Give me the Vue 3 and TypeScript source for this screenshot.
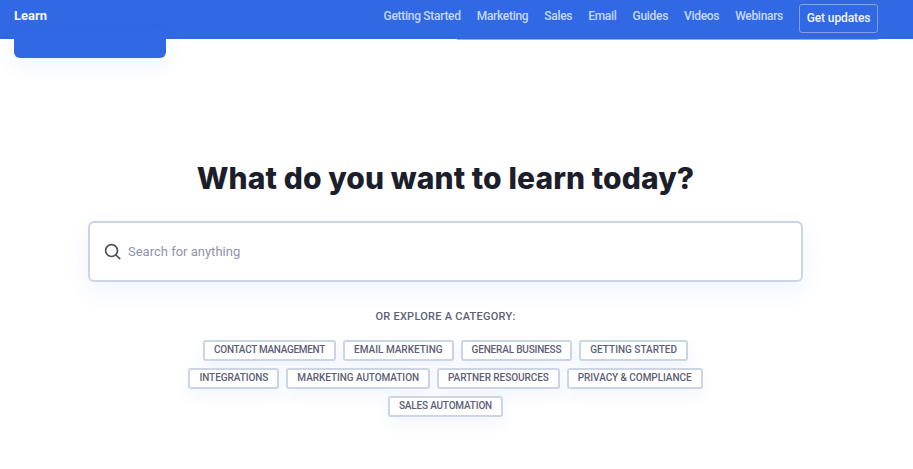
<script setup lang="ts">
interface Tag { label: string; fit?: 'tight' | 'snug' | 'plain' }
const links: string[] = ['Getting Started', 'Marketing', 'Sales', 'Email', 'Guides', 'Videos', 'Webinars']
const rows: Tag[][] = [
  [
    { label: 'Contact Management', fit: 'tight' },
    { label: 'Email Marketing', fit: 'plain' },
    { label: 'General Business', fit: 'snug' },
    { label: 'Getting Started', fit: 'plain' },
  ],
  [
    { label: 'Integrations' },
    { label: 'Marketing Automation' },
    { label: 'Partner Resources' },
    { label: 'Privacy & Compliance' },
  ],
  [{ label: 'Sales Automation', fit: 'snug' }],
]
</script>

<template>
  <div class="page">
    <header class="bar">
      <span class="brand">Learn</span>
      <nav class="nav">
        <a v-for="l in links" :key="l" class="link">{{ l }}</a>
        <a class="cta">Get updates</a>
      </nav>
      <div class="tab"></div>
      <div class="edge"></div>
    </header>
    <main class="hero">
      <h1 class="title">What do you want to learn today?</h1>
      <div class="search">
        <svg class="icon" width="17" height="17" viewBox="0 0 18 18" fill="none" stroke="#4a4f63" stroke-width="1.8" stroke-linecap="round">
          <circle cx="8" cy="8" r="6.3" />
          <path d="M12.7 12.7 L16.6 16.6" />
        </svg>
        <span class="placeholder">Search for anything</span>
      </div>
      <p class="explore">OR EXPLORE A CATEGORY:</p>
      <div class="tags">
        <div v-for="(row, i) in rows" :key="i" class="row">
          <span v-for="t in row" :key="t.label" class="tag" :class="t.fit">{{ t.label }}</span>
        </div>
      </div>
    </main>
  </div>
</template>

<style>
html, body { margin: 0; background: #fff; overflow: hidden; }
</style>

<style scoped>
.page {
  width: 913px;
  height: 469px;
  overflow: hidden;
  font-family: "Roboto", "Liberation Sans", sans-serif;
}
.bar {
  position: relative;
  height: 39px;
  background: #3169e4;
  display: flex;
  align-items: center;
  justify-content: space-between;
  padding: 0 35px 0 14px;
  box-sizing: border-box;
}
.brand {
  color: #f2f6ff;
  font-size: 13px;
  font-weight: 700;
  margin-top: -9px;
}
.nav {
  display: flex;
  align-items: center;
  gap: 16px;
  margin-top: -3px;
}
.link {
  color: #c6d7fb;
  font-size: 12px;
  font-weight: 500;
  letter-spacing: -0.3px;
  margin-top: -5px;
}
.cta {
  color: #f2f6ff;
  font-size: 12px;
  font-weight: 500;
  letter-spacing: -0.1px;
  width: 79px;
  text-align: center;
  height: 29px;
  line-height: 27px;
  box-sizing: border-box;
  border: 1px solid #7ea2f0;
  border-radius: 3px;
}
.tab {
  position: absolute;
  left: 14px;
  top: 30px;
  width: 152px;
  height: 28px;
  background: #3169e4;
  border-radius: 0 0 6px 6px;
  box-shadow: 0 8px 20px rgba(49, 105, 228, 0.07);
}
.edge {
  position: absolute;
  left: 457px;
  top: 39px;
  width: 421px;
  height: 1px;
  background: #a9adb8;
}
.hero {
  width: 891px;
  display: flex;
  flex-direction: column;
  align-items: center;
}
.title {
  margin: 120px 0 0;
  font-family: "Inter", "Liberation Sans", sans-serif;
  font-size: 30px;
  line-height: 38px;
  font-weight: 800;
  letter-spacing: 0.1px;
  color: #1d1e2c;
}
.search {
  margin-top: 24px;
  width: 715px;
  height: 61px;
  box-sizing: border-box;
  display: flex;
  align-items: center;
  gap: 7px;
  padding: 0 15px 0 14px;
  background: #fff;
  border: 2px solid #ccd5e4;
  border-radius: 6px;
  box-shadow: 0 8px 24px rgba(49, 105, 228, 0.08);
}
.placeholder {
  color: #8f93a8;
  font-size: 13px;
  margin-top: -1px;
}
.explore {
  margin: 27px 0 0;
  font-size: 11px;
  font-weight: 500;
  line-height: 16px;
  letter-spacing: 0.25px;
  color: #5c6075;
}
.tags {
  margin-top: 15px;
  display: flex;
  flex-direction: column;
  gap: 7px;
}
.row {
  display: flex;
  justify-content: center;
  gap: 7px;
}
.tag {
  height: 21px;
  line-height: 16px;
  box-sizing: border-box;
  padding: 0 9px;
  font-size: 10px;
  font-weight: 500;
  letter-spacing: -0.06px;
  text-transform: uppercase;
  color: #5c6075;
  background: #fff;
  border: 2px solid #ccd5e4;
  border-radius: 3px;
  box-shadow: 0 6px 16px rgba(49, 105, 228, 0.07);
}
.tight { letter-spacing: -0.3px; }
.snug { letter-spacing: -0.18px; }
.plain { letter-spacing: 0; }
</style>
